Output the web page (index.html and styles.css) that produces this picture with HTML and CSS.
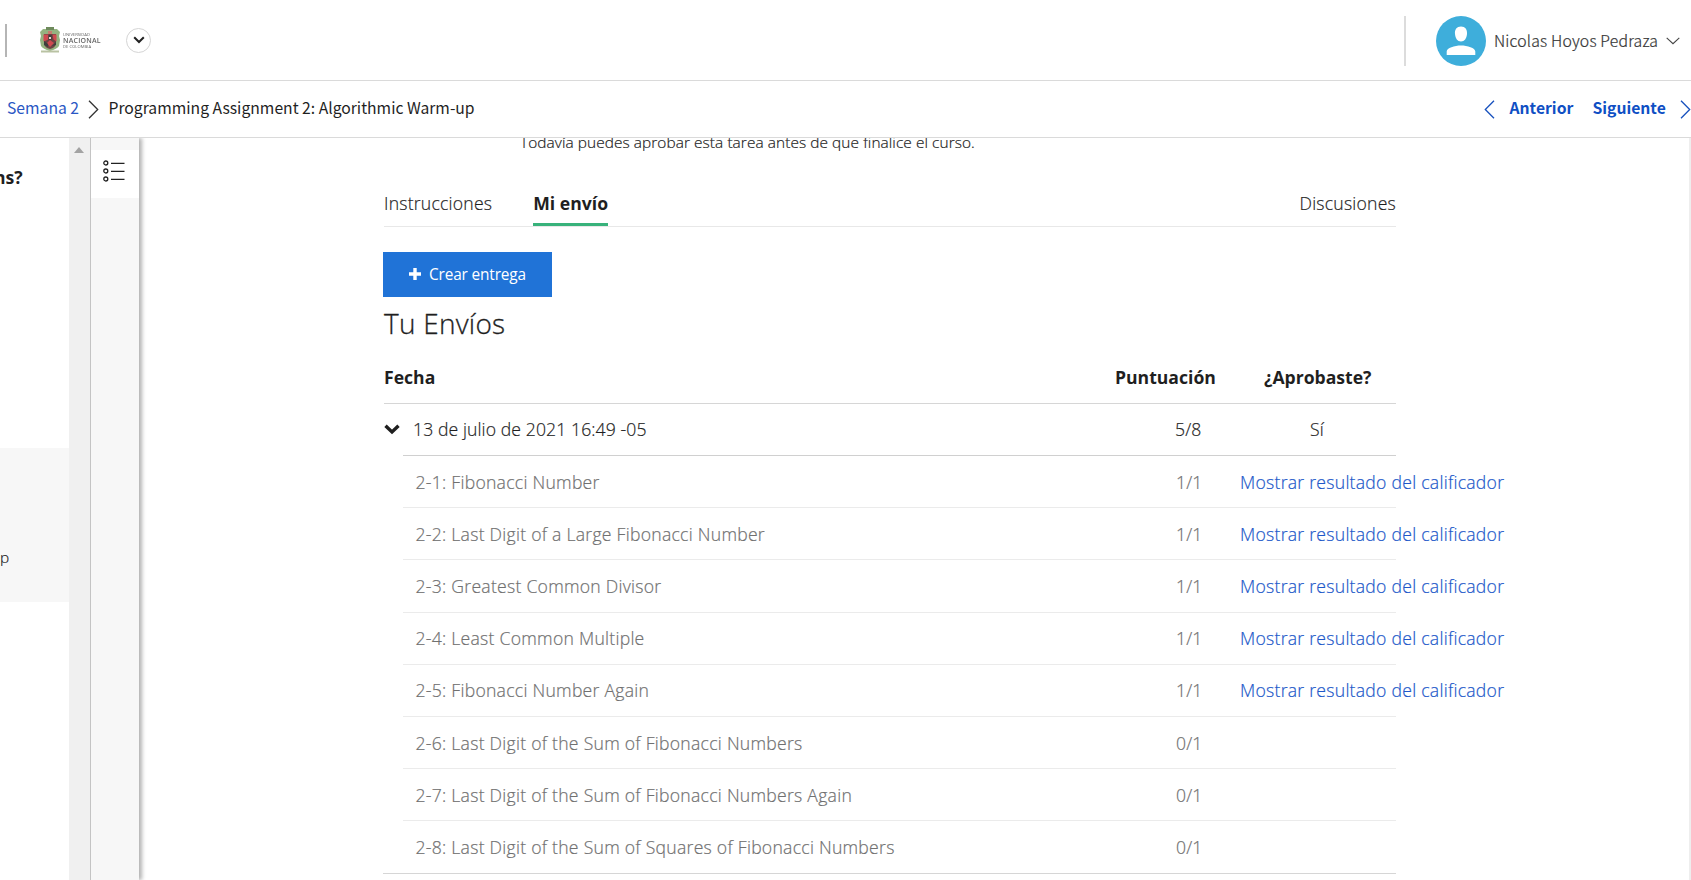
FILE: index.html
```html
<!DOCTYPE html>
<html lang="es">
<head>
<meta charset="utf-8">
<title>Programming Assignment 2: Algorithmic Warm-up</title>
<link rel="stylesheet" href="styles.css">
</head>
<body>
<header class="topbar">
  <span class="bar-left"></span>
  <div class="logo">
    <svg class="crest" width="22" height="28" viewBox="0 0 22 28">
      <path d="M4 3h14l3 3-1 4 1 4-1 6q-2 3-9 5-7-2-9-5l-1-6 1-4-1-4z" fill="#94b380"/>
      <path d="M7 1h8v3H7z" fill="#6e8a5c"/>
      <path d="M2 24.500h18v2H2z" fill="#b9c2a3"/>
      <path d="M5 8h12v10q-1 4-6 5-5-1-6-5z" fill="#6c4443"/>
      <path d="M4.500 8.500h5v5l-5 2zM17.500 8.500h-4l1 5 3 2zM8 17l3 4 4-4-4-3z" fill="#cf4a50"/>
      <path d="M5 15l4 3v3l-4-2zM13 20l4-4v3zM9.500 9h3v5h-3z" fill="#3d3f3d"/>
      <path d="M9 5h4v3H9z" fill="#c77d70"/>
      <path d="M10 11h2v2h-2z" fill="#e5dcd2"/>
    </svg>
    <div class="wordmark"><span class="w-small">UNIVERSIDAD</span><span class="w-big">NACIONAL</span><span class="w-small">DE COLOMBIA</span></div>
  </div>
  <span class="round"><svg width="12" height="8" viewBox="0 0 12 8"><path d="M1.200 1.200 6 6l4.800-4.800" fill="none" stroke="#222" stroke-width="2"/></svg></span>
  <div class="user">
    <svg class="avatar" width="50" height="50" viewBox="0 0 50 50"><circle cx="25" cy="25" r="25" fill="#3eaedb"/><path d="M25 10.500c4.200 0 6.500 3 6 7.500-.4 4.500-2.500 7.500-6 7.500s-5.600-3-6-7.500c-.5-4.500 1.800-7.500 6-7.500zM10.700 39v-3.500c0-3.500 8-6 14.300-6s14.300 2.500 14.300 6V39z" fill="#fff"/></svg>
    <span class="user-name">Nicolas Hoyos Pedraza</span>
    <svg width="14" height="8" viewBox="0 0 14 8"><path d="M.7.800 7 6.700 13.300.800" fill="none" stroke="#444" stroke-width="1.100"/></svg>
  </div>
</header>
<nav class="crumbs">
  <a class="crumb-link">Semana 2</a>
  <svg class="crumb-sep" width="11" height="19" viewBox="0 0 11 19"><path d="M1 .700 9.700 9.500 1 18.300" fill="none" stroke="#333" stroke-width="1.300"/></svg>
  <span class="crumb-current">Programming Assignment 2: Algorithmic Warm-up</span>
  <div class="pager">
    <svg width="11" height="19" viewBox="0 0 11 19"><path d="M10 .700 1.300 9.500 10 18.300" fill="none" stroke="#1650bd" stroke-width="1.300"/></svg>
    <a class="prev">Anterior</a><a class="next">Siguiente</a>
    <svg width="11" height="19" viewBox="0 0 11 19"><path d="M1 .700 9.700 9.500 1 18.300" fill="none" stroke="#1650bd" stroke-width="1.300"/></svg>
  </div>
</nav>
<div class="body">
  <aside class="lessons">
    <div class="lesson-top">ns?</div>
    <div class="lesson-active">p</div>
  </aside>
  <div class="scroll"><svg width="10" height="6" viewBox="0 0 10 6"><path d="M0 6 5 0l5 6z" fill="#a3a3a3"/></svg></div>
  <div class="rail">
    <div class="rail-btn"><svg width="22" height="22" viewBox="0 0 22 22" fill="none" stroke="#222" stroke-width="1.300"><circle cx="2.800" cy="3" r="2"/><circle cx="2.800" cy="11" r="2"/><circle cx="2.800" cy="19" r="2"/><path d="M8 3.300h13.500M8 11.300h13.500M8 19.300h13.500"/></svg></div>
  </div>
  <main class="main">
    <p class="notice">Todavía puedes aprobar esta tarea antes de que finalice el curso.</p>
    <div class="tabs"><span class="tab">Instrucciones</span><span class="tab active">Mi envío</span><span class="tab last">Discusiones</span></div>
    <button class="create"><svg width="12" height="12" viewBox="0 0 12 12"><path d="M6 0v12M0 6h12" stroke="#fff" stroke-width="3.400"/></svg><span>Crear entrega</span></button>
    <h2 class="title">Tu Envíos</h2>
    <div class="row head"><span class="name">Fecha</span><span class="score">Puntuación</span><span class="pass">¿Aprobaste?</span></div>
    <div class="row date"><svg class="chev" width="16" height="11" viewBox="0 0 16 11"><path d="M1.500 1.800 8 8l6.500-6.200" fill="none" stroke="#1f1f1f" stroke-width="3.400"/></svg><span class="name">13 de julio de 2021 16:49 -05</span><span class="score">5/8</span><span class="pass">Sí</span></div>
    <div class="parts">
      <div class="row part"><span class="name">2-1: Fibonacci Number</span><span class="score">1/1</span><a class="show">Mostrar resultado del calificador</a></div>
      <div class="row part"><span class="name">2-2: Last Digit of a Large Fibonacci Number</span><span class="score">1/1</span><a class="show">Mostrar resultado del calificador</a></div>
      <div class="row part"><span class="name">2-3: Greatest Common Divisor</span><span class="score">1/1</span><a class="show">Mostrar resultado del calificador</a></div>
      <div class="row part"><span class="name">2-4: Least Common Multiple</span><span class="score">1/1</span><a class="show">Mostrar resultado del calificador</a></div>
      <div class="row part"><span class="name">2-5: Fibonacci Number Again</span><span class="score">1/1</span><a class="show">Mostrar resultado del calificador</a></div>
      <div class="row part"><span class="name">2-6: Last Digit of the Sum of Fibonacci Numbers</span><span class="score">0/1</span><span class="show"></span></div>
      <div class="row part"><span class="name">2-7: Last Digit of the Sum of Fibonacci Numbers Again</span><span class="score">0/1</span><span class="show"></span></div>
      <div class="row part"><span class="name">2-8: Last Digit of the Sum of Squares of Fibonacci Numbers</span><span class="score">0/1</span><span class="show"></span></div>
    </div>
    <div class="end"></div>
  </main>
  <div class="edge"></div>
</div>
</body>
</html>
```
FILE: styles.css
```css
* { box-sizing: border-box; }
body { margin: 0; width: 1691px; height: 880px; overflow: hidden; background: #fff; color: #1f1f1f; font: 300 17.6px/24px "Open Sans", sans-serif; white-space: nowrap; display: flex; flex-direction: column; }
svg { display: block; flex: none; }
.topbar { height: 81px; flex: none; border-bottom: 1px solid #dadada; display: flex; align-items: center; }
.bar-left { width: 2px; height: 33px; margin-left: 5px; background: #b5b5b5; }
.logo { display: flex; align-items: center; margin-left: 32px; width: 87px; gap: 2px; }
.crest { filter: blur(.5px); }
.wordmark { display: flex; flex-direction: column; color: #666; font-family: "Open Sans", sans-serif; filter: blur(.3px); }
.w-small { font-size: 4.200px; line-height: 5px; font-weight: 400; }
.w-big { font-size: 7px; line-height: 7px; font-weight: 600; letter-spacing: .2px; }
.round { width: 25px; height: 25px; border: 1px solid #d5d5d5; border-radius: 50%; display: flex; align-items: center; justify-content: center; }
.user { margin-left: auto; margin-right: 11px; height: 50px; width: 276px; padding-left: 30px; border-left: 2px solid #dcdcdc; display: flex; align-items: center; margin-top: 1px; }
.user-name { font: 300 15.800px/24px "Noto Sans CJK SC", sans-serif; letter-spacing: .17px; -webkit-text-stroke: .2px; color: #333; margin: 0 8px 0 8px; width: 165px; }
.crumbs { height: 57px; flex: none; border-bottom: 1px solid #dadada; display: flex; align-items: center; padding: 0 0 2px 7px; font: 400 15.700px/24px "Noto Sans CJK SC", sans-serif; }
.crumb-link { color: #2a57c4; width: 81px; }
.crumbs svg { position: relative; top: 1px; }
.crumb-sep { margin-right: 9.500px; }
.pager { margin-left: auto; display: flex; align-items: center; color: #0f4fc4; font-weight: 700; }
.prev { margin-left: 15px; width: 83px; }
.next { width: 87.500px; }
.body { flex: 1; min-height: 0; display: flex; overflow: hidden; }
.lessons { width: 69px; overflow: hidden; }
.lesson-top { height: 310px; padding-top: 27px; margin-left: -6px; font-weight: 700; }
.lesson-active { height: 154px; background: #f7f7f7; padding-top: 98px; font-size: 15.400px; color: #222; -webkit-text-stroke: .2px; }
.scroll { width: 21px; background: #f0f0f0; padding: 9px 0 0 5px; }
.rail { width: 49px; background: #f7f7f7; border-left: 1px solid #c4c4c4; box-shadow: 3px 0 4px 0 rgba(0,0,0,.3); padding-top: 12px; clip-path: inset(0 -12px 0 0); }
.rail-btn { height: 48px; background: #fff; padding: 10px 0 0 12px; }
.main { margin-left: 244px; width: 1013px; }
.notice { margin: -7px 0 0 137px; height: 48px; font-size: 15.400px; line-height: 24px; color: #222; letter-spacing: .08px; -webkit-text-stroke: .2px; }
.tabs { height: 48px; margin-left: 1px; border-bottom: 1px solid #e8e8e8; display: flex; gap: 41px; }
.tab { padding-top: 12px; height: 47px; letter-spacing: .22px; -webkit-text-stroke: .2px; }
.tab.active { font-weight: 700; border-bottom: 3px solid #38b27b; letter-spacing: 0; -webkit-text-stroke: 0; }
.tab.last { margin-left: auto; }
.create { margin: 25px 0 0; width: 169px; height: 45px; border: 0; background: #2073d7; color: #fff; display: flex; align-items: center; gap: 8px; padding: 0 0 0 26px; font: 400 15.400px/24px "Open Sans", sans-serif; letter-spacing: -.15px; }
.create svg { position: relative; top: -1px; }
.title { margin: 7px 0 0 1px; font: 300 28px/38px "Open Sans", sans-serif; height: 47px; letter-spacing: .25px; -webkit-text-stroke: .3px; }
.row { display: flex; align-items: center; height: 52.200px; border-bottom: 1px solid #d6d6d6; }
.name { flex: 1; }
.head { height: 53px; margin-left: 1px; font-weight: 700; }
.head .score { width: 149px; }
.head .pass { width: 132px; }
.date { border-bottom: 0; height: 51px; padding-bottom: 1px; letter-spacing: .1px; -webkit-text-stroke: .2px; }
.date .name { margin-left: 13px; }
.date .score { width: 135px; }
.date .pass { width: 86px; }
.chev { margin-left: 1px; }
.parts { margin-left: 20px; border-top: 1px solid #d0d0d0; }
.part { border-color: #ebebeb; color: #707070; letter-spacing: .26px; -webkit-text-stroke: .2px; }
.part:last-child { border-bottom: 0; height: 51.600px; }
.part .name { padding-left: 12.500px; }
.part .score { width: 64px; letter-spacing: .1px; }
.part .show { width: 156px; color: #2057c9; }
.end { height: 1px; background: #d6d6d6; }
.edge { margin-left: auto; width: 2px; background: #eee; }
```
